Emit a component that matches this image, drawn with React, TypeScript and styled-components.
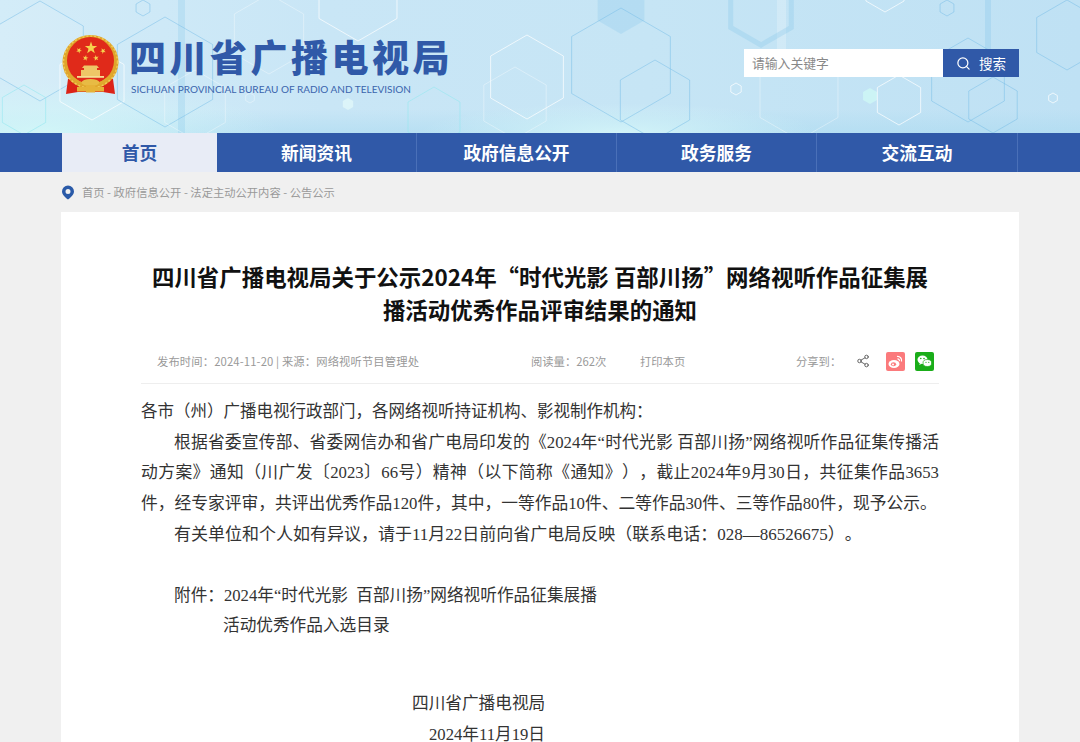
import styled, { createGlobalStyle } from 'styled-components';
import { Search, Share2 } from 'lucide-react';

const GlobalStyle = createGlobalStyle`
  html, body {
    margin: 0;
    padding: 0;
    background: #f0f0f0;
    font-family: "Noto Sans CJK SC", "Noto Sans", sans-serif;
    overflow: hidden;
  }
`;

const Page = styled.div`
  width: 1080px;
  height: 742px;
  overflow: hidden;
`;

const Header = styled.header`
  position: relative;
  height: 133px;
  overflow: hidden;
  background:
    radial-gradient(ellipse 240px 50px at 40px 133px, #d2f6f8 0%, rgba(210, 246, 248, 0) 100%),
    radial-gradient(ellipse 200px 30px at 620px 133px, #d2f3f8 0%, rgba(210, 243, 248, 0) 100%),
    linear-gradient(0deg, rgba(170, 218, 240, 0.55) 0%, rgba(170, 218, 240, 0) 18%),
    linear-gradient(90deg, #d3ecf8 0%, #c9e6f6 30%, #c6e5f5 60%, #bfe1f4 100%);
`;

const HexLayer = styled.svg`
  position: absolute;
  inset: 0;
`;

const HeaderInner = styled.div`
  position: relative;
  width: 958px;
  margin: 0 auto;
  height: 133px;
  display: flex;
  align-items: flex-start;
  justify-content: space-between;
`;

const Brand = styled.div`
  display: flex;
  gap: 8px;
  padding: 35px 0 0 1px;
`;

const BrandText = styled.div`
  display: flex;
  flex-direction: column;
`;

const BrandTitle = styled.div`
  color: #3059a8;
  font-size: 37px;
  line-height: 44px;
  font-weight: 900;
  letter-spacing: 3.5px;
  white-space: nowrap;
  margin: -1px 0 0 2px;
`;

const BrandSub = styled.div`
  color: #3a64ad;
  font-family: Lato, "Liberation Sans", sans-serif;
  font-size: 10px;
  line-height: 12px;
  margin: 5px 0 0 4px;
  white-space: nowrap;
`;

const SearchBox = styled.div`
  display: flex;
  margin-top: 49px;
  height: 28px;
`;

const SearchInput = styled.div`
  width: 191px;
  padding-left: 8px;
  background: #fff;
  color: #888;
  font-size: 12.8px;
  line-height: 28px;
`;

const SearchButton = styled.div`
  width: 76px;
  background: #3059a8;
  color: #fff;
  font-size: 13.5px;
  display: flex;
  align-items: center;
  justify-content: center;
  gap: 8px;
`;

const Nav = styled.nav`
  height: 39px;
  background: #3059a8;
`;

const NavInner = styled.div`
  width: 957px;
  margin: 0 auto;
  padding-left: 1px;
  display: flex;
`;

const NavItem = styled.div<{ $active?: boolean; $width: number }>`
  width: ${(p) => p.$width}px;
  height: 39px;
  line-height: 39px;
  text-align: center;
  font-size: 17.7px;
  font-weight: 700;
  color: ${(p) => (p.$active ? '#3059a8' : '#fff')};
  background: ${(p) => (p.$active ? '#e8ecf6' : 'transparent')};
  border-right: ${(p) => (p.$active ? '0' : '1px solid #4a70b8')};
  box-sizing: border-box;
`;

const Crumbs = styled.div`
  width: 958px;
  margin: 0 auto;
  height: 40px;
  display: flex;
  align-items: center;
  gap: 7px;
  color: #999;
  font-size: 11.3px;
`;

const Card = styled.main`
  width: 798px;
  margin: 0 auto;
  padding: 48px 80px 0;
  background: #fff;
  height: 600px;
`;

const Title = styled.h1`
  margin: 0;
  color: #111;
  font-size: 22.45px;
  line-height: 33px;
  font-weight: 700;
  text-align: center;
`;

const Meta = styled.div`
  display: flex;
  align-items: center;
  height: 44px;
  margin-top: 13px;
  padding-left: 16px;
  border-bottom: 1px solid #eee;
  color: #999;
  font-size: 11.3px;
`;

const MetaItem = styled.span<{ $width: number; $spaced?: boolean }>`
  width: ${(p) => p.$width}px;
  flex: none;
  white-space: nowrap;
  letter-spacing: ${(p) => (p.$spaced ? '0.13px' : '0')};
`;

const ShareIcon = styled.span<{ $gap: number }>`
  width: 19px;
  height: 19px;
  margin-left: ${(p) => p.$gap}px;
  display: inline-flex;
  align-items: center;
  justify-content: center;
`;

const Body = styled.article`
  margin-top: 13px;
  color: #333;
  font-family: "Liberation Serif", "Noto Sans CJK SC", serif;
  font-size: 16.67px;
  line-height: 30.7px;
  text-spacing-trim: space-all;
`;

const Lead = styled.p`
  margin: 0;
  font-size: 16.5px;
`;

const Para = styled.p<{ $size: number; $fill?: boolean }>`
  margin: 0;
  font-size: ${(p) => p.$size}px;
  text-indent: 33px;
  text-align: justify;
  text-align-last: ${(p) => (p.$fill ? 'justify' : 'auto')};
`;

const ParaEnd = styled.p`
  margin: 0;
  font-size: 16.75px;
  white-space: nowrap;
`;

const Attach = styled.p<{ $left: number }>`
  margin: 0;
  padding-left: ${(p) => p.$left}px;
`;

const Signature = styled.p<{ $left: number }>`
  margin: 0;
  padding-left: ${(p) => p.$left}px;
`;

const Gap = styled.div<{ $h: number }>`
  height: ${(p) => p.$h}px;
`;

function starPoints(cx: number, cy: number, r: number, turn = 0) {
  const pts: string[] = [];
  for (let i = 0; i < 10; i++) {
    const a = (Math.PI / 5) * i - Math.PI / 2 + turn;
    const d = i % 2 ? r * 0.4 : r;
    pts.push(`${cx + d * Math.cos(a)},${cy + d * Math.sin(a)}`);
  }
  return pts.join(' ');
}

function Emblem() {
  return (
    <svg width="57" height="60" viewBox="0 0 57 60">
      <path d="M6 44 L4 59 L16 57 L41 57 L53 59 L51 44 Z" fill="#dc2317" />
      <ellipse cx="28.500" cy="27" rx="28" ry="27" fill="#dfa52c" />
      <ellipse cx="28.500" cy="27" rx="27" ry="26" fill="none" stroke="#f2cb58" strokeWidth="1.500" strokeDasharray="2 2" />
      <circle cx="28.500" cy="25.500" r="23.500" fill="#e02a1a" />
      <polygon points={starPoints(29, 13, 6.5)} fill="#f6d34e" />
      <polygon points={starPoints(17, 15.5, 3, 0.5)} fill="#f6d34e" />
      <polygon points={starPoints(41, 16, 3, -0.5)} fill="#f6d34e" />
      <polygon points={starPoints(23.5, 23, 3, 0.2)} fill="#f6d34e" />
      <polygon points={starPoints(34, 23, 3, -0.2)} fill="#f6d34e" />
      <path d="M22 30.500 h13 l2 2.500 h-2 v2 h3 v6 H19 v-6 h3 v-2 h-2 Z" fill="#eec667" />
      <path d="M15 41 h27 v1.800 H15 Z" fill="#f5dd92" />
      <path d="M7 38 Q28.500 60 50 38 L50 42 Q28.500 62 7 42 Z" fill="#e0a92e" />
      <ellipse cx="28.500" cy="47.500" rx="9" ry="3.500" fill="#e8bb44" />
      <path d="M15 52 h27 v4.500 H15 Z" fill="#e6b338" />
      <path d="M24 50 h9 v7.500 h-9 Z" fill="#e6b338" />
    </svg>
  );
}

function PinIcon() {
  return (
    <svg width="14" height="15" viewBox="0 0 14 15">
      <path fillRule="evenodd" d="M7 .5a6 6 0 0 1 6 6c0 3-3 5.800-6 8-3-2.200-6-5-6-8a6 6 0 0 1 6-6Zm0 3.500a2.500 2.500 0 1 0 0 5 2.500 2.500 0 0 0 0-5Z" fill="#2a5aa8" />
    </svg>
  );
}

function WeiboIcon() {
  return (
    <svg width="19" height="19" viewBox="0 0 19 19">
      <rect width="19" height="19" rx="2" fill="#fb7a7c" />
      <ellipse cx="8" cy="12" rx="5.500" ry="4" fill="#fff" />
      <ellipse cx="7.500" cy="12.300" rx="2.600" ry="2" fill="#fb7a7c" />
      <circle cx="7" cy="12.500" r="1" fill="#fff" />
      <path d="M11 4.500a4 4 0 0 1 4.500 5M11.500 6.800a2 2 0 0 1 2 2.400" stroke="#fff" strokeWidth="1.200" fill="none" />
    </svg>
  );
}

function WechatIcon() {
  return (
    <svg width="19" height="19" viewBox="0 0 19 19">
      <rect width="19" height="19" rx="2" fill="#1aad19" />
      <ellipse cx="7.500" cy="7.800" rx="5" ry="4.200" fill="#fff" />
      <path d="M5 11l-.8 2 2.400-1.200Z" fill="#fff" />
      <ellipse cx="12.300" cy="11" rx="4.300" ry="3.500" fill="#fff" stroke="#1aad19" strokeWidth=".7" />
      <circle cx="5.800" cy="6.500" r=".8" fill="#1aad19" />
      <circle cx="9" cy="6.500" r=".8" fill="#1aad19" />
      <circle cx="11" cy="10.300" r=".6" fill="#1aad19" />
      <circle cx="13.800" cy="10.300" r=".6" fill="#1aad19" />
    </svg>
  );
}

type Hex = { x: number; y: number; r: number; stroke: string; fill?: string; width?: number };

const WHITE = 'rgba(255,255,255,0.7)';
const BLUE = 'rgba(120,190,232,0.5)';
const CYAN = 'rgba(150,232,240,0.6)';
const SOFT = 'rgba(255,255,255,0.35)';

// hexagon outlines behind the header
const hexes: Hex[] = [
  { x: 40, y: 51, r: 50, stroke: BLUE, fill: 'rgba(255,255,255,0.08)' },
  { x: 92, y: 83, r: 37, stroke: WHITE },
  { x: 165, y: 72, r: 55, stroke: BLUE },
  { x: 24, y: 110, r: 25, stroke: CYAN },
  { x: 195, y: 105, r: 35, stroke: SOFT },
  { x: 143, y: 8, r: 8, stroke: BLUE },
  { x: 250, y: 98, r: 5, stroke: SOFT },
  { x: 348, y: 104, r: 6, stroke: 'none', fill: 'rgba(225,248,250,0.75)' },
  { x: 269, y: 34, r: 40, stroke: SOFT },
  { x: 358, y: -4, r: 45, stroke: WHITE },
  { x: 434, y: 117, r: 30, stroke: CYAN },
  { x: 527, y: 77, r: 42, stroke: WHITE },
  { x: 515, y: 103, r: 36, stroke: SOFT },
  { x: 621, y: 7, r: 27, stroke: 'none', fill: 'rgba(120,190,232,0.22)' },
  { x: 621, y: 65, r: 57, stroke: BLUE },
  { x: 655, y: 100, r: 40, stroke: BLUE },
  { x: 761, y: 10, r: 35, stroke: 'rgba(120,190,232,0.25)', width: 5 },
  { x: 736, y: 89, r: 6, stroke: WHITE },
  { x: 799, y: 95, r: 45, stroke: SOFT },
  { x: 870, y: 96, r: 8, stroke: 'none', fill: 'rgba(205,245,245,0.9)' },
  { x: 899, y: 100, r: 25, stroke: WHITE },
  { x: 885, y: -10, r: 22, stroke: WHITE },
  { x: 947, y: 8, r: 8, stroke: BLUE },
  { x: 968, y: 80, r: 42, stroke: BLUE },
  { x: 993, y: 105, r: 28, stroke: BLUE },
  { x: 1067, y: 35, r: 35, stroke: BLUE },
  { x: 1053, y: 98, r: 5, stroke: WHITE },
];

function hexPoints(cx: number, cy: number, r: number) {
  const pts: string[] = [];
  for (let i = 0; i < 6; i++) {
    const a = (Math.PI / 3) * i + Math.PI / 6;
    pts.push(`${cx + r * Math.cos(a)},${cy + r * Math.sin(a)}`);
  }
  return pts.join(' ');
}

const navItems = [
  { label: '首页', width: 155, active: true },
  { label: '新闻资讯', width: 200 },
  { label: '政府信息公开', width: 200 },
  { label: '政务服务', width: 200 },
  { label: '交流互动', width: 201 },
];

export default function App() {
  return (
    <Page>
      <GlobalStyle />
      <Header>
        <HexLayer width="1080" height="133" viewBox="0 0 1080 133">
          <rect x="178" y="0" width="7" height="133" fill="rgba(120,190,232,0.22)" />
          <rect x="777" y="0" width="9" height="60" fill="rgba(255,255,255,0.22)" />
          <rect x="985" y="0" width="6" height="50" fill="rgba(120,190,232,0.25)" />
          {hexes.map((h) => (
            <polygon
              key={`${h.x}-${h.y}`}
              points={hexPoints(h.x, h.y, h.r)}
              fill={h.fill ?? 'none'}
              stroke={h.stroke}
              strokeWidth={h.width ?? 1}
            />
          ))}
        </HexLayer>
        <HeaderInner>
          <Brand>
            <Emblem />
            <BrandText>
              <BrandTitle>四川省广播电视局</BrandTitle>
              <BrandSub>SICHUAN PROVINCIAL BUREAU OF RADIO AND TELEVISION</BrandSub>
            </BrandText>
          </Brand>
          <SearchBox>
            <SearchInput>请输入关键字</SearchInput>
            <SearchButton>
              <Search size={15} strokeWidth={2} />
              搜索
            </SearchButton>
          </SearchBox>
        </HeaderInner>
      </Header>
      <Nav>
        <NavInner>
          {navItems.map((item) => (
            <NavItem key={item.label} $active={item.active} $width={item.width}>
              {item.label}
            </NavItem>
          ))}
        </NavInner>
      </Nav>
      <Crumbs>
        <PinIcon />
        首页 - 政府信息公开 - 法定主动公开内容 - 公告公示
      </Crumbs>
      <Card>
        <Title>
          四川省广播电视局关于公示2024年“时代光影 百部川扬”网络视听作品征集展
          <br />
          播活动优秀作品评审结果的通知
        </Title>
        <Meta>
          <MetaItem $width={374} $spaced>发布时间：2024-11-20 | 来源：网络视听节目管理处</MetaItem>
          <MetaItem $width={109}>阅读量：262次</MetaItem>
          <MetaItem $width={156}>打印本页</MetaItem>
          <MetaItem $width={44}>分享到：</MetaItem>
          <ShareIcon $gap={13}>
            <Share2 size={14} color="#555" strokeWidth={1.5} />
          </ShareIcon>
          <ShareIcon $gap={14}>
            <WeiboIcon />
          </ShareIcon>
          <ShareIcon $gap={10}>
            <WechatIcon />
          </ShareIcon>
        </Meta>
        <Body>
          <Lead>各市（州）广播电视行政部门，各网络视听持证机构、影视制作机构：</Lead>
          <Para $size={16.75} $fill>
            根据省委宣传部、省委网信办和省广电局印发的《2024年“时代光影 百部川扬”网络视听作品征集传播活动方案》通知（川广发〔2023〕66号）精神（以下简称《通知》），截止2024年9月30日，共征集作品3653
          </Para>
          <ParaEnd>件，经专家评审，共评出优秀作品120件，其中，一等作品10件、二等作品30件、三等作品80件，现予公示。</ParaEnd>
          <Para $size={17}>有关单位和个人如有异议，请于11月22日前向省广电局反映（联系电话：028—86526675）。</Para>
          <Gap $h={30} />
          <Attach $left={33}>附件：2024年“时代光影&nbsp; 百部川扬”网络视听作品征集展播</Attach>
          <Attach $left={82}>活动优秀作品入选目录</Attach>
          <Gap $h={47} />
          <Signature $left={271}>四川省广播电视局</Signature>
          <Signature $left={288}>2024年11月19日</Signature>
        </Body>
      </Card>
    </Page>
  );
}
